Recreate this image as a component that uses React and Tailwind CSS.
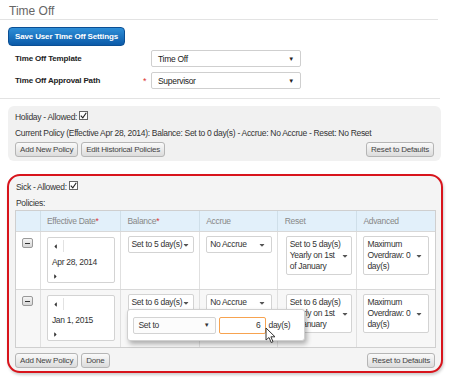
import { FaCaretDown, FaCaretLeft, FaCaretRight } from 'react-icons/fa';

const font = { fontFamily: '"Liberation Sans", Arial, sans-serif' };

function GrayButton({ children }) {
  return (
    <button className="h-[15px] px-[4px] text-[8px] tracking-[-0.2px] leading-[13px] text-[#444] bg-gradient-to-b from-[#fafafa] to-[#dcdcdc] border border-[#b5b5b5] rounded-[3px] whitespace-nowrap">
      {children}
    </button>
  );
}

function Select({ value }) {
  return (
    <div className="w-[150px] h-[17px] bg-white border border-[#cfcfcf] rounded-[2px] flex items-center justify-between pl-[6px] pr-[6px] text-[8.5px] tracking-[-0.3px] font-normal text-[#222]">
      <span>{value}</span>
      <span className="text-[6px] text-[#222]">▼</span>
    </div>
  );
}

function CellSelect({ lines, h = 'h-[17px]' }) {
  return (
    <div className={`w-[66px] ${h} bg-white border border-[#d3d3d3] rounded-[2px] flex items-center justify-between pl-[3px] pr-[5px] text-[8.5px] tracking-[-0.3px] leading-[11px] text-[#333]`}>
      <div>
        {lines.map((l) => (
          <div key={l} className="whitespace-nowrap">{l}</div>
        ))}
      </div>
      <FaCaretDown className="text-[8px] text-[#555] shrink-0" />
    </div>
  );
}

function DateBox({ date }) {
  return (
    <div className="w-[68px] h-[46px] bg-white border border-[#d3d3d3] rounded-[2px] flex flex-col justify-between px-[4px] py-[2px] text-[8.5px] tracking-[-0.3px] leading-[11px] text-[#333]">
      <div className="flex items-center h-[12px]">
        <FaCaretLeft className="text-[7px]" />
        <span className="ml-[4px] h-[12px] border-l border-[#e2e2e2]" />
      </div>
      <div>{date}</div>
      <FaCaretRight className="text-[7px]" />
    </div>
  );
}

function Minus() {
  return (
    <div className="w-[11px] h-[10px] bg-gradient-to-b from-[#f5f5f5] to-[#d6d6d6] border border-[#999] rounded-[2px] flex items-center justify-center">
      <div className="w-[5px] h-[1px] bg-[#333]" />
    </div>
  );
}

function Check() {
  return (
    <span className="inline-flex w-[9px] h-[9px] border border-[#666] bg-white items-center justify-center align-[1px] ml-[2px]">
      <svg width="7" height="7" viewBox="0 0 7 7">
        <path d="M0.8 3.6 L2.8 5.8 L6.3 0.8" stroke="#222" strokeWidth="1.1" fill="none" />
      </svg>
    </span>
  );
}

const cols = ['w-[25px]', 'w-[80px]', 'w-[80px]', 'w-[78px]', 'w-[80px]', 'w-[78px]'];

function Row({ date, bal, reset, bg, popup }) {
  return (
    <div className={`flex h-[58px] border-t border-[#d8d8d8] ${bg}`}>
      <div className={`${cols[0]} border-r border-[#e0e0e0] flex justify-center pt-[6px]`}>
        <Minus />
      </div>
      <div className={`${cols[1]} border-r border-[#e0e0e0] pl-[6px] pt-[5px]`}>
        <DateBox date={date} />
      </div>
      <div className={`${cols[2]} border-r border-[#e0e0e0] pl-[7px] pt-[4px] relative`}>
        <CellSelect lines={[bal]} />
        {popup}
      </div>
      <div className={`${cols[3]} border-r border-[#e0e0e0] pl-[6px] pt-[4px]`}>
        <CellSelect lines={['No Accrue']} />
      </div>
      <div className={`${cols[4]} border-r border-[#e0e0e0] pl-[8px] pt-[4px]`}>
        <CellSelect lines={reset} h="h-[39px]" />
      </div>
      <div className={`${cols[5]} pl-[6px] pt-[4px]`}>
        <CellSelect lines={['Maximum', 'Overdraw: 0', 'day(s)']} h="h-[39px]" />
      </div>
    </div>
  );
}

function Popup() {
  return (
    <div className="absolute left-[6px] top-[19px] w-[178px] h-[32px] bg-white border border-[#d0d0d0] rounded-[3px] shadow-[2px_3px_5px_rgba(0,0,0,0.3)] flex items-center pl-[5px] z-10 text-[8.5px] tracking-[-0.3px]">
      <div className="w-[83px] h-[17px] border border-[#d3d3d3] rounded-[2px] flex items-center justify-between pl-[5px] pr-[5px] text-[#333] bg-[#fcfcfc]">
        <span>Set to</span>
        <span className="text-[6px]">▼</span>
      </div>
      <div className="ml-[3px] w-[47px] h-[17px] bg-white border border-[#f7a350] rounded-[2px] flex items-center justify-end pr-[4px] text-[#333]">
        6
      </div>
      <span className="ml-[3px] text-[#333]">day(s)</span>
      <svg className="absolute left-[137px] top-[17px]" width="12" height="17" viewBox="0 0 12 17">
        <path d="M1 1 L1 13 L4 10.5 L6.2 15.5 L8 14.7 L5.9 9.8 L10 9.8 Z" fill="#fff" stroke="#333" strokeWidth="1" strokeLinejoin="round" />
      </svg>
    </div>
  );
}

export default function App() {
  return (
    <div className="w-[450px] h-[379px] bg-white text-[#333] overflow-hidden leading-[12px]" style={font}>
      {/* Header */}
      <div className="pl-[9px] pt-[4px] h-[20px] border-b border-[#e3e3e3] mr-[12px] text-[12px] leading-[14px] text-[#666]">
        Time Off
      </div>
      <div className="flex pl-[8px] pt-[7px]">
        <button className="h-[19px] w-[117px] rounded-[4px] bg-gradient-to-b from-[#2e8fd8] to-[#0b5aa8] border border-[#0b4f94] text-white text-[8px] tracking-[-0.15px] font-bold leading-[17px] whitespace-nowrap">
          Save User Time Off Settings
        </button>
      </div>
      <div className="pl-[15px] mt-[4px] flex items-center h-[17px] text-[8px] tracking-[-0.15px] font-bold text-[#222]">
        <span className="w-[136px]">Time Off Template</span>
        <Select value="Time Off" />
      </div>
      <div className="pl-[15px] mt-[5px] flex items-center h-[17px] text-[8px] tracking-[-0.15px] font-bold text-[#222]">
        <span className="w-[128px]">Time Off Approval Path</span>
        <span className="w-[8px] text-[#d33] font-normal text-[9px]">*</span>
        <Select value="Supervisor" />
      </div>
      <div className="mt-[9px] border-t border-[#e3e3e3] mr-[10px]" />

      {/* Holiday */}
      <div className="mt-[7px] ml-[8px] w-[433px] h-[55px] bg-[#f1f1f1] rounded-[6px] px-[7px] pt-[4px] text-[8.5px] tracking-[-0.3px]">
        <div className="h-[14px] leading-[14px] text-[#333]">
          Holiday - Allowed:<Check />
        </div>
        <div className="mt-[3px] h-[13px] leading-[13px] whitespace-nowrap">
          Current Policy (Effective Apr 28, 2014): Balance: Set to 0 day(s) - Accrue: No Accrue - Reset: No Reset
        </div>
        <div className="mt-[2px] flex items-center">
          <GrayButton>Add New Policy</GrayButton>
          <span className="ml-[3px] flex"><GrayButton>Edit Historical Policies</GrayButton></span>
          <span className="ml-auto flex"><GrayButton>Reset to Defaults</GrayButton></span>
        </div>
      </div>

      {/* Sick */}
      <div className="mt-[13px] ml-[7px] w-[436px] h-[199px] border-2 border-[#d8141c] rounded-[13px] bg-[#f4f4f4] px-[6px] pt-[4px] text-[8.5px] tracking-[-0.3px] shadow-[1px_2px_3px_rgba(0,0,0,0.2)]">
        <div className="h-[14px] leading-[14px] pl-[1px]">
          Sick - Allowed:<Check />
        </div>
        <div className="mt-[3px] h-[13px] leading-[13px] pl-[1px]">Policies:</div>
        <div className="w-[421px] border border-[#cfcfcf] bg-white">
          <div className="flex h-[20px] bg-[#e2f0fa] text-[#888] leading-[20px]">
            <div className={`${cols[0]} border-r border-[#cfdfe9]`} />
            <div className={`${cols[1]} border-r border-[#cfdfe9] pl-[6px]`}>
              Effective Date<span className="text-[#d33]">*</span>
            </div>
            <div className={`${cols[2]} border-r border-[#cfdfe9] pl-[7px]`}>
              Balance<span className="text-[#d33]">*</span>
            </div>
            <div className={`${cols[3]} border-r border-[#cfdfe9] pl-[6px]`}>Accrue</div>
            <div className={`${cols[4]} border-r border-[#cfdfe9] pl-[7px]`}>Reset</div>
            <div className={`${cols[5]} pl-[6px]`}>Advanced</div>
          </div>
          <Row date="Apr 28, 2014" bal="Set to 5 day(s)" reset={['Set to 5 day(s)', 'Yearly on 1st', 'of January']} bg="bg-white" />
          <Row date="Jan 1, 2015" bal="Set to 6 day(s)" reset={['Set to 6 day(s)', 'Yearly on 1st', 'of January']} bg="bg-[#f7f7f7]" popup={<Popup />} />
        </div>
        <div className="mt-[5px] flex items-center">
          <GrayButton>Add New Policy</GrayButton>
          <span className="ml-[3px] flex"><GrayButton>Done</GrayButton></span>
          <span className="ml-auto flex"><GrayButton>Reset to Defaults</GrayButton></span>
        </div>
      </div>
    </div>
  );
}
